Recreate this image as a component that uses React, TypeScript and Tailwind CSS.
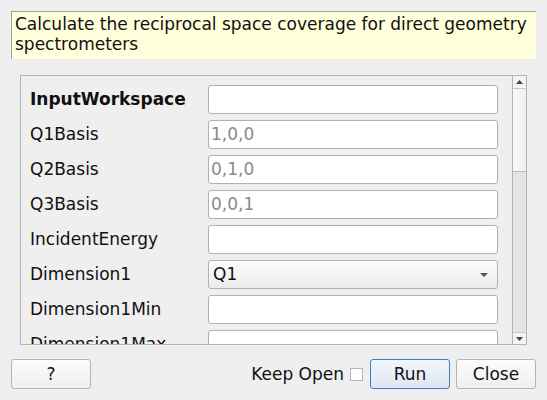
import React from "react";

type Row = { label: string; kind: "text" | "combo"; value?: string; placeholder?: string; bold?: boolean };

const rows: Row[] = [
  { label: "InputWorkspace", kind: "text", bold: true },
  { label: "Q1Basis", kind: "text", placeholder: "1,0,0" },
  { label: "Q2Basis", kind: "text", placeholder: "0,1,0" },
  { label: "Q3Basis", kind: "text", placeholder: "0,0,1" },
  { label: "IncidentEnergy", kind: "text" },
  { label: "Dimension1", kind: "combo", value: "Q1" },
  { label: "Dimension1Min", kind: "text" },
  { label: "Dimension1Max", kind: "text" },
];

function Field({ row }: { row: Row }) {
  if (row.kind === "combo") {
    return (
      <div className="w-[290px] h-[29px] shrink-0 rounded-[3px] border border-[#b1b1b1] bg-gradient-to-b from-[#fcfcfc] to-[#ececec] flex items-center pl-[4px] pr-[8px] text-[#111]">
        <span className="flex-1">{row.value}</span>
        <svg width="8" height="4" viewBox="0 0 8 4" className="mr-[1px]">
          <path d="M0 0 L8 0 L4 4 Z" fill="#555" />
        </svg>
      </div>
    );
  }
  return (
    <div className="w-[290px] h-[29px] shrink-0 rounded-[3px] border border-[#b1b1b1] bg-white flex items-center pl-[2px] text-[#8a8a8a]">
      {row.placeholder ?? ""}
    </div>
  );
}

export default function App() {
  return (
    <div
      className="w-[547px] h-[400px] bg-[#efefef] flex flex-col overflow-hidden text-[17px] text-[#111]"
      style={{ fontFamily: '"DejaVu Sans", sans-serif' }}
    >
      <div className="mx-[11px] mt-[11px] h-[48px] bg-[#ffffdc] border-t border-l border-[#a0a0a0] pl-[3px] pt-[2px] leading-[20px] text-[#111]">
        Calculate the reciprocal space coverage for direct geometry spectrometers
      </div>

      <div className="ml-[20px] mr-[20px] mt-[16px] h-[270px] border border-[#b4b4b4] flex overflow-hidden">
        <div className="flex-1 overflow-hidden pt-[9px] pl-[9px] flex flex-col gap-[6px]">
          {rows.map((r) => (
            <div key={r.label} className="flex items-center h-[29px] shrink-0">
              <div className={"w-[178px] shrink-0 leading-none " + (r.bold ? "font-bold" : "")}>{r.label}</div>
              <Field row={r} />
            </div>
          ))}
        </div>
        <div className="w-[14px] border-l border-[#b4b4b4] flex flex-col shrink-0">
          <div className="h-[13px] bg-[#f4f4f4] border-b border-[#c8c8c8] flex items-center justify-center">
            <svg width="7" height="4" viewBox="0 0 7 4">
              <path d="M0 4 L7 4 L3.5 0 Z" fill="#444" />
            </svg>
          </div>
          <div className="h-[83px] bg-gradient-to-r from-[#fafafa] to-[#f0f0f0] border-b border-[#bcbcbc]" />
          <div className="flex-1 bg-[#e4e4e4]" />
          <div className="h-[12px] bg-[#f4f4f4] border-t border-[#c8c8c8] flex items-center justify-center">
            <svg width="7" height="4" viewBox="0 0 7 4">
              <path d="M0 0 L7 0 L3.5 4 Z" fill="#444" />
            </svg>
          </div>
        </div>
      </div>

      <div className="mx-[11px] mt-[14px] flex items-center h-[30px]">
        <button className="w-[80px] h-[30px] pt-[1px] rounded-[3px] border border-[#b4b4b4] bg-gradient-to-b from-[#fcfcfc] to-[#efefef] text-[#111]">
          ?
        </button>
        <div className="flex-1" />
        <span className="text-[#111] pt-[1px] mr-[-1px]">Keep Open</span>
        <div className="ml-[7px] w-[13px] h-[13px] border border-[#b4b4b4] bg-white" />
        <button className="ml-[7px] w-[80px] h-[30px] pt-[1px] rounded-[3px] border border-[#3c7fc1] bg-gradient-to-b from-[#f3f7fb] to-[#dde7f1] text-[#111]">
          Run
        </button>
        <button className="ml-[6px] w-[80px] h-[30px] pt-[1px] rounded-[3px] border border-[#b4b4b4] bg-gradient-to-b from-[#fcfcfc] to-[#efefef] text-[#111]">
          Close
        </button>
      </div>
    </div>
  );
}
